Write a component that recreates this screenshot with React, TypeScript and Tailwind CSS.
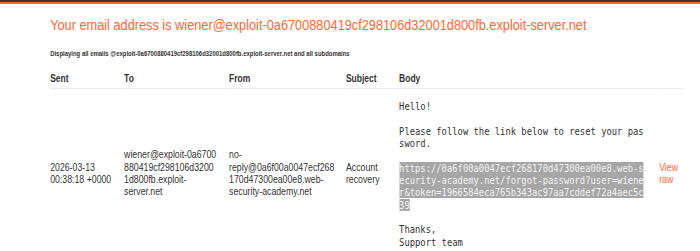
import React from "react";

export default function App() {
  const sans = { fontFamily: '"Liberation Sans", Arial, sans-serif' };
  return (
    <div className="w-[700px] h-[251px] overflow-hidden bg-white">
      <div className="h-[2px] bg-[#333332]" />
      <div className="h-[2px] bg-[#ff6633]" />
      <div className="w-[824px] origin-top-left scale-x-[0.85]" style={sans}>
        <div className="pl-[59px]">
          <h1 className="mt-[11px] text-[15px] leading-[20px] text-[#ff6633] font-normal whitespace-nowrap">
            Your email address is wiener@exploit-0a6700880419cf298106d32001d800fb.exploit-server.net
          </h1>
          <p className="mt-[14px] text-[7px] leading-[10px] font-bold text-[#333332] whitespace-nowrap">
            Displaying all emails @exploit-0a6700880419cf298106d32001d800fb.exploit-server.net and all subdomains
          </p>
          <table className="mt-[14px] w-[745px] border-collapse text-[10.3px] text-[#333332] table-fixed">
            <thead>
              <tr className="border-b border-[#e8e8e8]">
                <th className="w-[87px] text-left font-bold pb-[3px] leading-[12px] text-[10px]">Sent</th>
                <th className="w-[123.5px] text-left font-bold pb-[3px] leading-[12px] text-[10px]">To</th>
                <th className="w-[137.5px] text-left font-bold pb-[3px] leading-[12px] text-[10px]">From</th>
                <th className="w-[62.5px] text-left font-bold pb-[3px] leading-[12px] text-[10px]">Subject</th>
                <th className="w-[306px] text-left font-bold pb-[3px] leading-[12px] text-[10px]">Body</th>
                <th className="text-left"></th>
              </tr>
            </thead>
            <tbody>
              <tr className="leading-[12.4px]">
                <td className="align-middle whitespace-nowrap">
                  2026-03-13<br />00:38:18 +0000
                </td>
                <td className="align-middle whitespace-nowrap">
                  wiener@exploit-0a6700<br />880419cf298106d3200<br />1d800fb.exploit-<br />server.net
                </td>
                <td className="align-middle whitespace-nowrap">
                  no-<br />reply@0a6f00a0047ecf268<br />170d47300ea00e8.web-<br />security-academy.net
                </td>
                <td className="align-middle whitespace-nowrap">
                  Account<br />recovery
                </td>
                <td className="align-middle pt-[11px] pb-[11px]">
                  <pre
                    className="text-[10.4px] leading-[12.35px] text-[#333332] whitespace-pre"
                    style={{ fontFamily: '"DejaVu Sans Mono", monospace' }}
                  >
{`Hello!

Please follow the link below to reset your pas
sword.

`}<span className="bg-[#a6a6a6] text-[#f2f2f2]">{`https://0a6f00a0047ecf268170d47300ea00e8.web-s
ecurity-academy.net/forgot-password?user=wiene
r&token=1966584eca765b343ac97aa7cddef72a4aec5c
39`}</span>{`

Thanks,
Support team`}
                  </pre>
                </td>
                <td className="align-middle text-[#ff6633]">
                  View<br />raw
                </td>
              </tr>
            </tbody>
          </table>
        </div>
      </div>
    </div>
  );
}
